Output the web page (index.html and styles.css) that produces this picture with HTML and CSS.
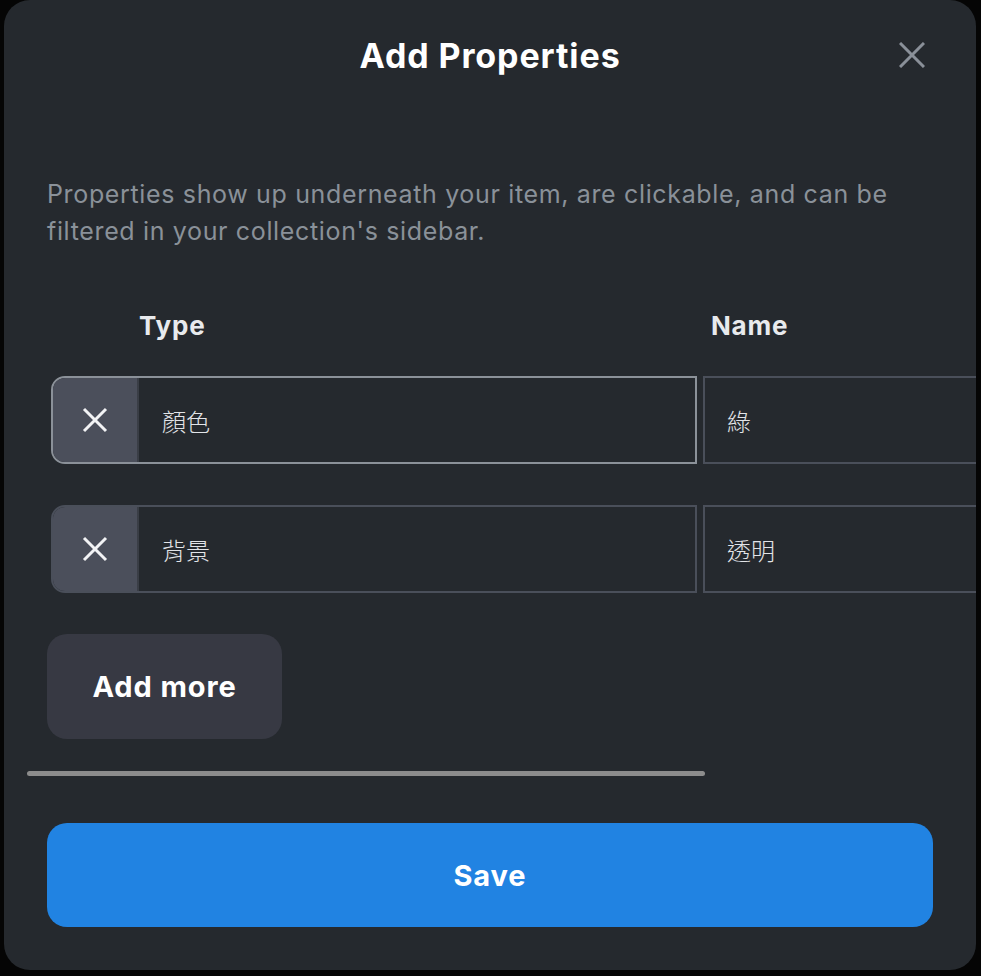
FILE: index.html
```html
<!DOCTYPE html>
<html lang="en">
<head>
<meta charset="utf-8">
<title>Add Properties</title>
<link rel="stylesheet" href="styles.css">
</head>
<body>
<div class="stage">
  <div class="modal">
    <div class="modal-header">
      <span></span>
      <h1 class="title">Add Properties</h1>
      <button class="close" aria-label="Close">
        <svg width="26" height="26" viewBox="0 0 26 26"><path d="M1 1L25 25M25 1L1 25" stroke="#8a9099" stroke-width="3" fill="none"/></svg>
      </button>
    </div>
    <p class="desc">Properties show up underneath your item, are clickable, and can be filtered in your collection's sidebar.</p>
    <div class="table-scroll">
      <div class="table">
        <div class="head-row">
          <div class="head-type">Type</div>
          <div class="head-name">Name</div>
        </div>
        <div class="row focused">
          <div class="type-group">
            <button class="del" aria-label="Remove">
              <svg width="26" height="26" viewBox="0 0 26 26"><path d="M2 2L24 24M24 2L2 24" stroke="#f2f3f5" stroke-width="3" fill="none"/></svg>
            </button>
            <div class="field type-field">顏色</div>
          </div>
          <div class="field name-field">綠</div>
        </div>
        <div class="row">
          <div class="type-group">
            <button class="del" aria-label="Remove">
              <svg width="26" height="26" viewBox="0 0 26 26"><path d="M2 2L24 24M24 2L2 24" stroke="#f2f3f5" stroke-width="3" fill="none"/></svg>
            </button>
            <div class="field type-field">背景</div>
          </div>
          <div class="field name-field">透明</div>
        </div>
        <button class="add-more">Add more</button>
      </div>
      <div class="scrollbar"><div class="thumb"></div></div>
    </div>
    <button class="save">Save</button>
  </div>
  <div class="edge"></div>
</div>
</body>
</html>
```
FILE: styles.css
```css
* { box-sizing: border-box; }
html, body {
  margin: 0;
  padding: 0;
  background: #050505;
  width: 981px;
  height: 976px;
  overflow: hidden;
}
body {
  font-family: Inter, "Noto Sans", "Noto Sans CJK TC", sans-serif;
}
.stage {
  display: flex;
  height: 976px;
}
.modal {
  margin-left: 4px;
  width: 972px;
  height: 970px;
  background: #25292e;
  border-radius: 26px;
  overflow: hidden;
  padding: 0 43px;
  display: flex;
  flex-direction: column;
}
.edge {
  flex: 1;
}
.modal-header {
  height: 110px;
  display: grid;
  grid-template-columns: 1fr auto 1fr;
  align-items: center;
}
.title {
  margin: 0;
  font-size: 34px;
  font-weight: 700;
  color: #ffffff;
  letter-spacing: 0.9px;
}
.close {
  justify-self: end;
  margin-right: 8px;
  background: none;
  border: 0;
  padding: 0;
  width: 26px;
  height: 26px;
  display: flex;
}
.desc {
  margin: 66px 0 0;
  font-size: 25px;
  line-height: 37px;
  color: #8a9199;
  width: 880px;
  letter-spacing: 0.65px;
}
.table-scroll {
  margin: 0 -20px 0 -20px;
  padding: 0 0 0 20px;
  overflow: visible;
}
.table {
  display: flex;
  flex-direction: column;
  width: 1220px;
}
.head-row {
  display: flex;
  height: 87px;
  align-items: center;
  margin-top: 32px;
  margin-bottom: 7px;
  font-size: 26px;
  font-weight: 700;
  color: #e8eaed;
  letter-spacing: 0.8px;
}
.head-type {
  margin-left: 92px;
  width: 572px;
}
.row {
  display: flex;
  height: 88px;
  margin-left: 4px;
  margin-bottom: 41px;
  gap: 6px;
}
.type-group {
  display: flex;
  width: 646px;
  height: 88px;
  border: 2px solid #4a4f5a;
  border-radius: 14px 0 0 14px;
  overflow: hidden;
}
.focused .type-group {
  border-color: #8b9199;
}
.del {
  width: 86px;
  flex: none;
  background: #4b4f5b;
  border: 0;
  border-right: 2px solid #3a3e46;
  display: flex;
  align-items: center;
  justify-content: center;
  padding: 0;
}
.field {
  display: flex;
  align-items: center;
  font-family: "Noto Sans CJK TC", sans-serif;
  font-weight: 300;
  font-size: 24px;
  color: #e2e4e8;
}
.type-field {
  flex: 1;
  padding-left: 23px;
  background: #25292e;
}
.name-field {
  width: 560px;
  height: 88px;
  border: 2px solid #4a4f5a;
  padding-left: 22px;
}
.add-more {
  width: 235px;
  height: 105px;
  border: 0;
  border-radius: 20px;
  background: #373943;
  color: #ffffff;
  font-family: Inter, "Noto Sans", sans-serif;
  font-size: 29px;
  font-weight: 700;
  letter-spacing: 0.9px;
  align-self: flex-start;
}
.scrollbar {
  margin-top: 32px;
  margin-left: -20px;
  height: 5px;
}
.thumb {
  width: 678px;
  height: 5px;
  border-radius: 3px;
  background: #8c8c8c;
}
.save {
  margin-top: 47px;
  height: 104px;
  width: 100%;
  border: 0;
  border-radius: 20px;
  background: #2183e2;
  color: #ffffff;
  font-family: Inter, "Noto Sans", sans-serif;
  font-size: 29px;
  font-weight: 700;
  letter-spacing: 0.9px;
}
```
